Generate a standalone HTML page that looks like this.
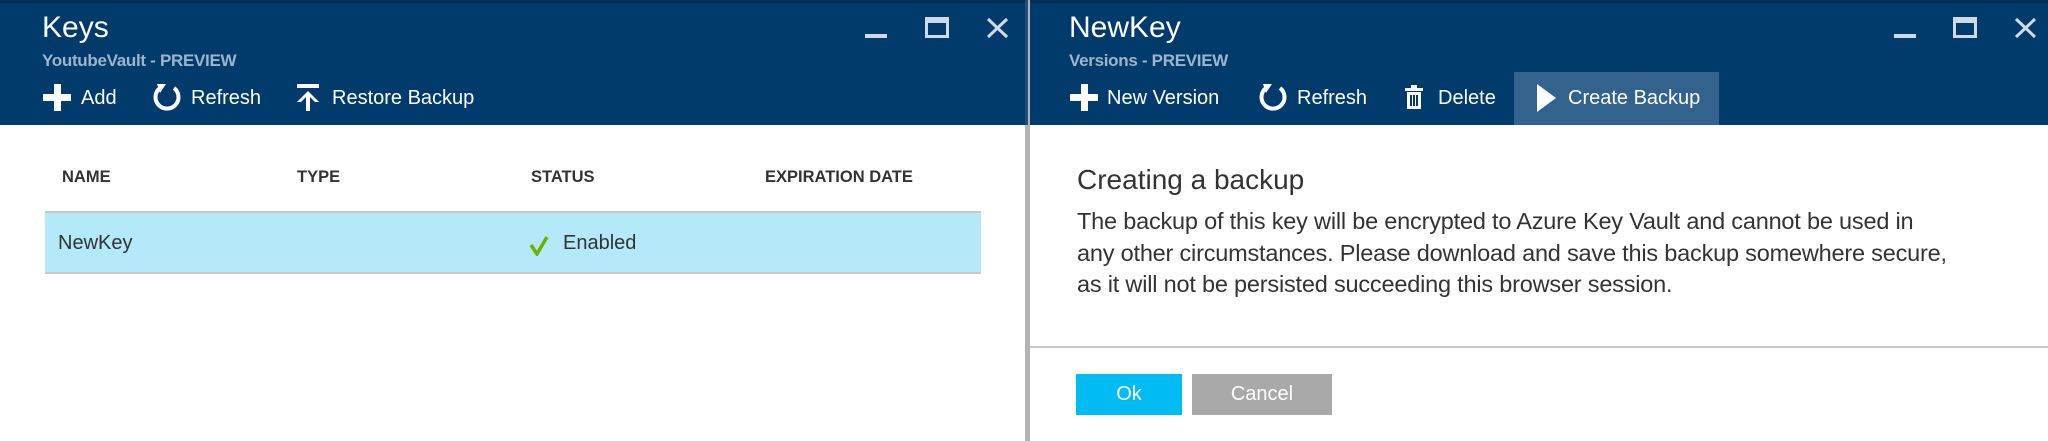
<!DOCTYPE html>
<html><head><meta charset="utf-8"><style>
*{margin:0;padding:0;box-sizing:border-box}
body{width:2048px;height:441px;overflow:hidden;background:#fff;font-family:"Liberation Sans",sans-serif;position:relative}
.a{position:absolute;white-space:nowrap}
.hdr{position:absolute;top:0;height:125px;background:#003b6b;border-top:3px solid #022e55}
.t{color:#fff;font-size:30px;top:11px}
.s{color:#9db4cc;font-size:17px;font-weight:bold;top:51px;letter-spacing:-0.3px}
.tb{color:#fff;font-size:20px;top:87px}
.th{color:#333;font-size:16.5px;font-weight:bold;top:168px}
</style></head><body>
<div class="hdr" style="left:0;width:1025px"></div>
<div class="a" style="left:1025px;top:0;width:5px;height:441px;background:#b3b3b3"></div>
<div class="hdr" style="left:1030px;width:1018px"></div>
<div class="a" style="left:1025px;top:0;width:3px;height:125px;background:#1c4f7e"></div>

<!-- left panel -->
<div class="a t" style="left:42px">Keys</div>
<div class="a s" style="left:42px">YoutubeVault - PREVIEW</div>
<svg class="a" style="left:0;top:0" width="1025" height="125">
 <g fill="#cfdae6"><rect x="865" y="34" width="22" height="4"/>
 <path d="M925 17h24v21h-24zM928 23v12h18v-12z" fill-rule="evenodd"/></g>
 <path d="M988 19l19 18M1007 19l-19 18" stroke="#cfdae6" stroke-width="3"/>
 <g fill="#fff"><rect x="43" y="94" width="28" height="7"/><rect x="54" y="84" width="7" height="27"/></g>
 <path d="M160 88 A11.5 11.5 0 1 0 174 88" fill="none" stroke="#fff" stroke-width="4"/>
 <path d="M166 84l-9 0l3 9z" fill="#fff"/>
 <rect x="297" y="84" width="22" height="4" fill="#fff"/>
 <path d="M308 91l-11 11h4l5-5v14h4v-14l5 5h4z" fill="#fff"/>
</svg>
<div class="a tb" style="left:81px">Add</div>
<div class="a tb" style="left:191px">Refresh</div>
<div class="a tb" style="left:332px">Restore Backup</div>

<div class="a th" style="left:62px">NAME</div>
<div class="a th" style="left:297px">TYPE</div>
<div class="a th" style="left:531px">STATUS</div>
<div class="a th" style="left:765px">EXPIRATION DATE</div>
<div class="a" style="left:45px;top:211px;width:936px;height:63px;background:#b3e9f8;border-top:2px solid #c9c9c9;border-bottom:2px solid #c9c9c9"></div>
<div class="a" style="left:58px;top:232px;font-size:20px;color:#333">NewKey</div>
<svg class="a" style="left:529px;top:236px" width="22" height="20"><path d="M2 9l6 9l10-17" fill="none" stroke="#6fb300" stroke-width="3.5"/></svg>
<div class="a" style="left:563px;top:232px;font-size:20px;color:#333">Enabled</div>

<!-- right panel -->
<div class="a t" style="left:1069px">NewKey</div>
<div class="a s" style="left:1069px">Versions - PREVIEW</div>
<div class="a" style="left:1514px;top:72px;width:205px;height:53px;background:#33628c"></div>
<svg class="a" style="left:0;top:0" width="2048" height="125">
 <g fill="#cfdae6"><rect x="1894" y="34" width="22" height="4"/>
 <path d="M1953 17h24v21h-24zM1956 23v12h18v-12z" fill-rule="evenodd"/></g>
 <path d="M2016 19l19 18M2035 19l-19 18" stroke="#cfdae6" stroke-width="3"/>
 <g fill="#fff"><rect x="1070" y="94" width="28" height="7"/><rect x="1081" y="84" width="7" height="27"/></g>
 <path d="M1266 88 A11.5 11.5 0 1 0 1280 88" fill="none" stroke="#fff" stroke-width="4"/>
 <path d="M1272 84l-9 0l3 9z" fill="#fff"/>
 <g fill="#fff"><rect x="1405" y="88" width="18" height="3"/><rect x="1411" y="85" width="6" height="3"/>
 <path d="M1407 92h14v17h-14zM1410 95v11h2v-11zM1413 95v11h2v-11zM1416 95v11h2v-11z" fill-rule="evenodd"/>
 <path d="M1537 84l19 14l-19 14z"/></g>
</svg>
<div class="a tb" style="left:1107px">New Version</div>
<div class="a tb" style="left:1297px">Refresh</div>
<div class="a tb" style="left:1438px">Delete</div>
<div class="a tb" style="left:1568px">Create Backup</div>

<div class="a" style="left:1077px;top:164px;font-size:28px;color:#333">Creating a backup</div>
<div class="a" style="left:1077px;top:206px;font-size:23.5px;line-height:31.5px;color:#333;letter-spacing:-0.2px">The backup of this key will be encrypted to Azure Key Vault and cannot be used in<br>any other circumstances. Please download and save this backup somewhere secure,<br>as it will not be persisted succeeding this browser session.</div>
<div class="a" style="left:1030px;top:346px;width:1018px;height:2px;background:#c8c8c8"></div>
<div class="a" style="left:1076px;top:374px;width:106px;height:41px;background:#00bcf2;color:#fff;font-size:20px;text-align:center;line-height:41px">Ok</div>
<div class="a" style="left:1192px;top:374px;width:140px;height:41px;background:#a9a9a9;color:#fff;font-size:20px;text-align:center;line-height:41px">Cancel</div>
</body></html>
